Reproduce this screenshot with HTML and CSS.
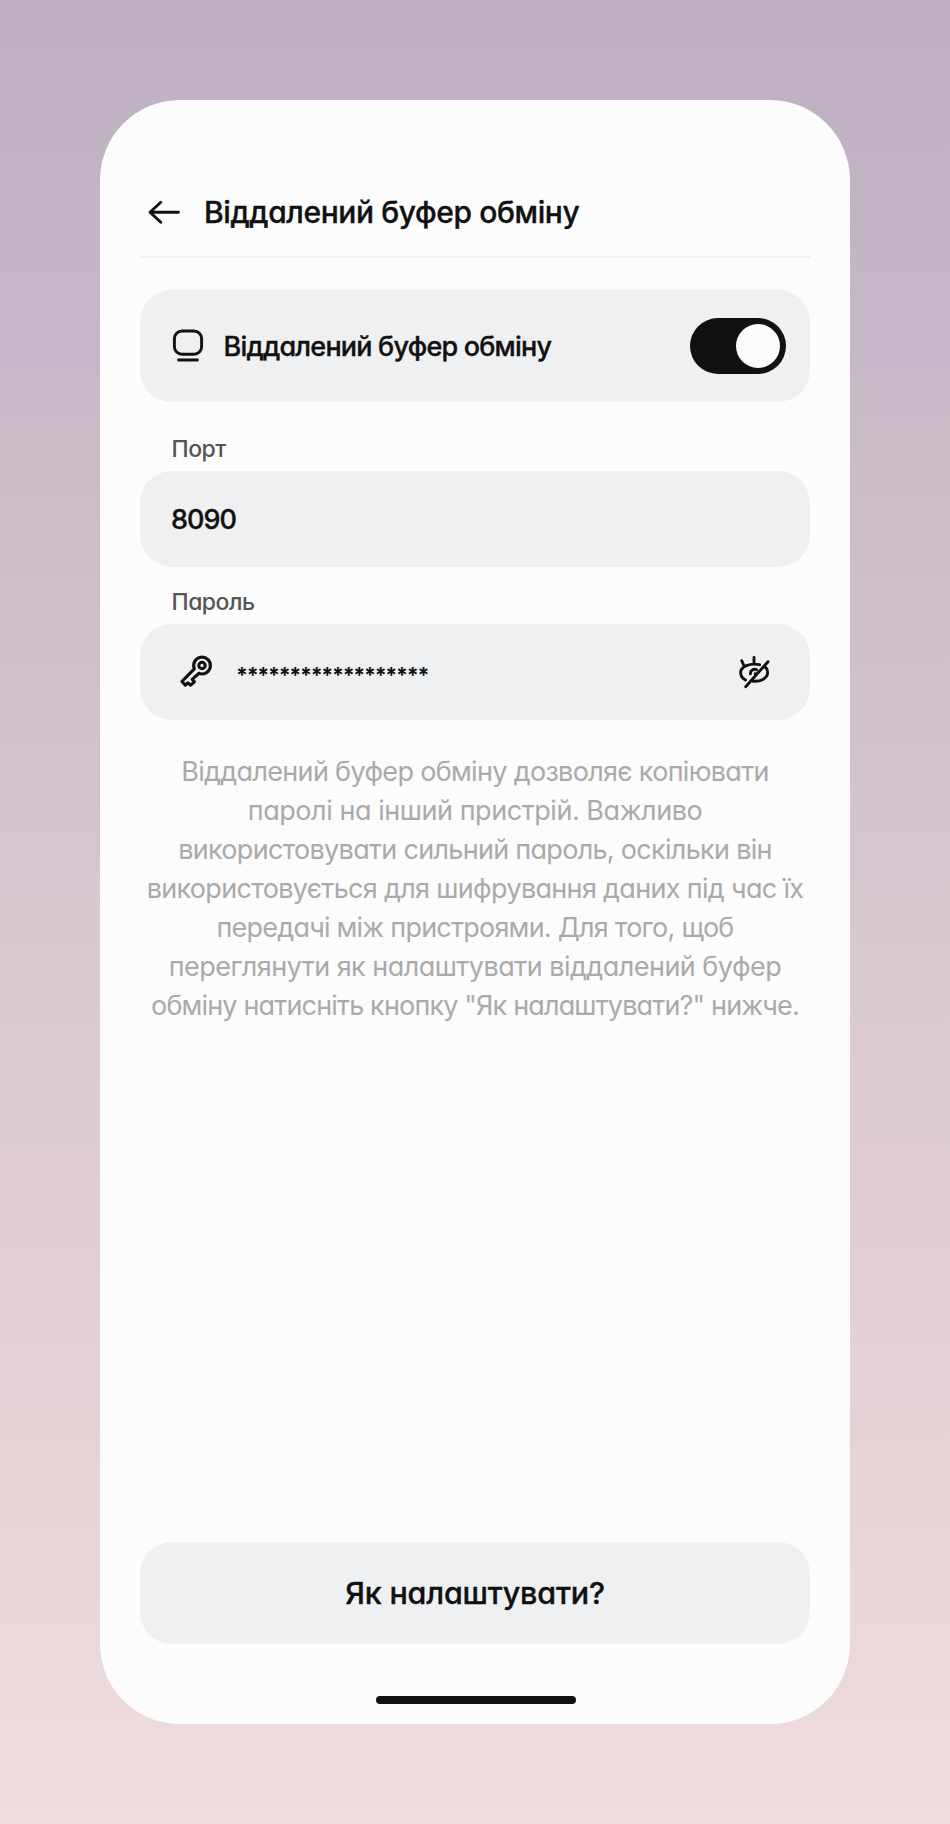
FILE: index.html
```
<!DOCTYPE html>
<html lang="uk">
<head>
<meta charset="utf-8">
<title>Віддалений буфер обміну</title>
<link rel="stylesheet" href="styles.css">
</head>
<body>
<main class="phone">
  <header class="header">
    <svg class="icon back" viewBox="0 0 36 36"><path d="M32.4 18.2H4M14.8 8.2 4 18.2l10.8 10"/></svg>
    <h1 class="title">Віддалений буфер обміну</h1>
  </header>
  <section class="card">
    <svg class="icon" viewBox="0 0 36 36"><rect x="4.4" y="3" width="27.2" height="23.2" rx="7.5"/><path d="M8.6 32h18.8"/></svg>
    <span class="card-title">Віддалений буфер обміну</span>
    <span class="toggle"><span class="knob"></span></span>
  </section>
  <div class="label label-port">Порт</div>
  <div class="field"><span class="value">8090</span></div>
  <div class="label label-password">Пароль</div>
  <div class="field field-password">
    <svg class="icon icon-bold" viewBox="0 0 36 36"><path d="M16.3 14.8A8.4 8.4 0 1 1 20.8 19.3L14.2 25.4 16.4 27.8 12.6 31.2 9.8 28.8 7.4 31.1 3.9 27.5Z"/><circle cx="24" cy="11.5" r="3.2"/></svg>
    <span class="stars">******************</span>
    <svg class="icon" viewBox="0 0 36 36"><path d="M32 7.7 9.7 32.7M5.7 6.7l1.7 3.8M18 3.4v6.4M23.6 10.7C14 8.8 4.6 12.5 4.6 18.6c0 3.4 1.8 5.8 4.9 7.5M29.6 13.4c1.4 1.4 2 3.1 2 5.2 0 5.6-6.5 9.2-14.6 8.6M20.6 15.7c-3-1.4-6.3.6-6.2 4.2M19.2 19.6v.3"/></svg>
  </div>
  <p class="note">
    <span class="line line-1">Віддалений буфер обміну дозволяє копіювати</span>
    <span class="line line-2">паролі на інший пристрій. Важливо</span>
    <span class="line line-3">використовувати сильний пароль, оскільки він</span>
    <span class="line line-4">використовується для шифрування даних під час їх</span>
    <span class="line line-5">передачі між пристроями. Для того, щоб</span>
    <span class="line line-6">переглянути як налаштувати віддалений буфер</span>
    <span class="line line-7">обміну натисніть кнопку "Як налаштувати?" нижче.</span>
  </p>
  <button class="button">Як налаштувати?</button>
  <div class="home"></div>
</main>
</body>
</html>
```
FILE: styles.css
```
* {
  box-sizing: border-box;
}

body {
  margin: 0;
  height: 1824px;
  padding: 100px;
  background: linear-gradient(#beb0c2 0, #c6b7c8 368px, #c8b9c6 378px, #d7c8d0 930px, #dfcdd2 1200px, #efdcdd 1824px);
  font-family: Inter, "Noto Sans", sans-serif;
  font-feature-settings: "cv11";
  color: #111;
}

.phone {
  width: 750px;
  height: 1624px;
  border-radius: 80px;
  background: #fcfcfc;
  padding: 80px 40px 20px;
  display: flex;
  flex-direction: column;
}

.header {
  height: 78px;
  padding-bottom: 12px;
  display: flex;
  align-items: center;
  border-bottom: 2px solid #f0f0f0;
}

.icon {
  flex: none;
  width: 36px;
  height: 36px;
  fill: none;
  stroke: #111;
  stroke-width: 2.9;
  stroke-linecap: round;
  stroke-linejoin: round;
}

.icon-bold {
  stroke-width: 3.1;
}

.back {
  margin: 0 22px 0 6px;
}

.title,
.card-title,
.value,
.button {
  -webkit-text-stroke: 0.35px #111;
}

.title {
  margin: 0;
  font-size: 30px;
  font-weight: 500;
  letter-spacing: -0.4px;
}

.card {
  height: 112px;
  margin-top: 32px;
  border-radius: 32px;
  background: #eff0f2;
  display: flex;
  align-items: center;
  padding: 0 24px 0 30px;
}

.card-title {
  margin-left: 17.5px;
  font-size: 27px;
  font-weight: 500;
  letter-spacing: -0.8px;
}

.toggle {
  margin-left: auto;
  width: 96px;
  height: 56px;
  border-radius: 28px;
  background: #111;
  padding: 6px;
  display: flex;
  justify-content: flex-end;
}

.knob {
  width: 44px;
  height: 44px;
  border-radius: 50%;
  background: #fcfcfc;
}

.label {
  height: 36px;
  padding-left: 31.5px;
  font-size: 23px;
  line-height: 28px;
  font-weight: 500;
  letter-spacing: -0.5px;
  color: #555;
}

.label-port {
  margin-top: 33px;
}

.label-password {
  margin-top: 21px;
}

.field {
  height: 96px;
  border-radius: 32px;
  background: #eff0f2;
  display: flex;
  align-items: center;
  padding: 0 38px 0 31px;
}

.field-password {
  padding-left: 38px;
}

.value {
  font-size: 27px;
  font-weight: 500;
  letter-spacing: -1px;
}

.stars {
  flex: 1;
  margin-left: 22px;
  padding-top: 6px;
  font-size: 21.4px;
  font-weight: 700;
  letter-spacing: -1.29px;
}

.note {
  margin: 32px 0 0;
  font-size: 27px;
  line-height: 39px;
  text-align: center;
  color: #aaa;
  white-space: nowrap;
}

.line {
  display: block;
}

.line-1 { letter-spacing: -0.68px; }
.line-2 { letter-spacing: -0.45px; }
.line-3 { letter-spacing: -0.7px; }
.line-4 { letter-spacing: -0.68px; }
.line-5 { letter-spacing: -0.77px; }
.line-6 { letter-spacing: -0.53px; }
.line-7 { letter-spacing: -0.84px; }

.button {
  height: 102px;
  margin-top: auto;
  padding: 0 0 2px;
  border: 0;
  border-radius: 32px;
  background: #eff0f2;
  color: #111;
  font: 500 30.5px Inter, "Noto Sans", sans-serif;
  font-feature-settings: "cv11";
  letter-spacing: -0.2px;
}

.home {
  align-self: center;
  width: 200px;
  height: 8px;
  margin: 52px 0 0 2px;
  border-radius: 4px;
  background: #111;
}
```
